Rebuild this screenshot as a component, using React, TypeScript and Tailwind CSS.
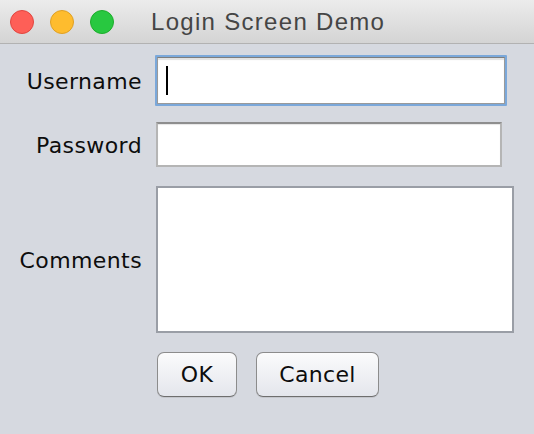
import React from "react";

const labelCls =
  "w-[142px] shrink-0 text-right text-[22px] leading-none tracking-[0.4px] text-[#0d0d0d] [font-family:'DejaVu_Sans',sans-serif] pt-[2px]";

const btnCls =
  "h-[45px] rounded-[7px] border border-[#8c8c8c] border-b-[#6e6e6e] bg-gradient-to-b from-[#fbfbfc] to-[#e4e6ec] text-[22px] leading-none tracking-[0.3px] text-[#0d0d0d] [font-family:'DejaVu_Sans',sans-serif] shadow-[0_1px_0_#c4c6cc] pt-[1px]";

export default function App() {
  return (
    <div className="w-[534px] h-[434px] bg-[#d6d9e0] flex flex-col overflow-hidden">
      {/* Title bar */}
      <div className="h-[44px] shrink-0 flex items-center border-b border-[#b2b2b2] bg-gradient-to-b from-[#ececec] to-[#d4d4d4]">
        <div className="flex items-center gap-[16px] pl-[10px]">
          <span className="w-[24px] h-[24px] rounded-full bg-[#fe5f57] border border-[#e1463f]" />
          <span className="w-[24px] h-[24px] rounded-full bg-[#febc2e] border border-[#dfa024]" />
          <span className="w-[24px] h-[24px] rounded-full bg-[#28c840] border border-[#1dad2b]" />
        </div>
        <div className="ml-[37px] text-[24px] leading-none tracking-[1.3px] text-[#454545] [font-family:'Liberation_Sans',sans-serif]">
          Login Screen Demo
        </div>
      </div>

      {/* Form */}
      <div className="flex flex-col pt-[11px]">
        <div className="flex items-center h-[51px]">
          <div className={labelCls}>Username</div>
          <div className="ml-[13px] w-[352px] h-[51px] p-[2px] bg-[#7ba8da] rounded-[1px]">
            <div className="w-full h-full border border-[#9a9a9a] border-t-[#7e7e7e] bg-white shadow-[inset_0_2px_1px_#e2e2e2] flex items-center pl-[8px]">
              <span className="w-[2px] h-[29px] bg-black" />
            </div>
          </div>
        </div>

        <div className="flex items-center h-[45px] mt-[16px]">
          <div className={labelCls}>Password</div>
          <div className="ml-[14px] w-[346px] h-[45px] border-2 border-[#b5b5b5] border-t-[#8e8e8e] bg-white shadow-[inset_0_1px_1px_#e6e6e6]" />
        </div>

        <div className="flex items-center h-[147px] mt-[19px]">
          <div className={labelCls}>Comments</div>
          <div className="ml-[14px] w-[358px] h-[147px] border-2 border-[#9a9ea6] bg-white" />
        </div>

        <div className="flex items-center h-[45px] mt-[19px] pl-[157px] gap-[19px]">
          <button className={"w-[80px] " + btnCls}>OK</button>
          <button className={"w-[123px] " + btnCls}>Cancel</button>
        </div>
      </div>
    </div>
  );
}
